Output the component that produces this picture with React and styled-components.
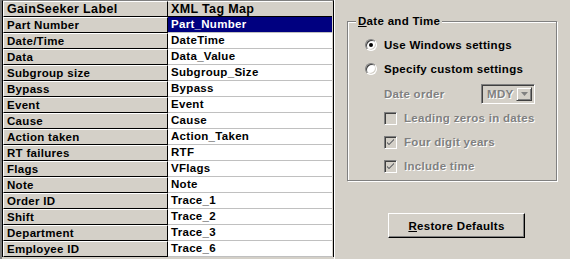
import styled, { createGlobalStyle, css } from "styled-components";

const GlobalStyle = createGlobalStyle`
  html, body {
    margin: 0;
    padding: 0;
    background: #d4d0c8;
  }
  body {
    font-family: "Liberation Sans", Arial, sans-serif;
    font-size: 11.5px;
    letter-spacing: 0.3px;
    font-weight: bold;
    color: #000;
  }
`;

const disabledText = css`
  color: #808080;
  text-shadow: 1px 1px 0 #fff;
`;

const headerText = css`
  font-size: 12.5px;
  letter-spacing: 0.35px;
`;

const Window = styled.div`
  display: flex;
  width: 570px;
  height: 259px;
  overflow: hidden;
`;

const TableFrame = styled.div`
  width: 335px;
  height: 259px;
  border-left: 2px solid #808080;
  border-right: 1px solid #fff;
  box-sizing: border-box;
  flex-shrink: 0;
`;

const Grid = styled.div`
  display: grid;
  grid-template-columns: 165px 164px;
  grid-auto-rows: 16px;
  border-left: 1px solid #000;
  border-right: 1px solid #000;
  border-top: 1px solid #808080;
`;

const LabelCell = styled.div`
  box-sizing: border-box;
  height: 16px;
  background: #d4d0c8;
  border-top: 1px solid #fff;
  border-left: 1px solid #fff;
  border-bottom: 1px solid #000;
  border-right: 1px solid #000;
  padding-left: 3px;
  line-height: 14px;
  white-space: nowrap;
  overflow: hidden;
  ${(p) => p.$header && headerText}
`;

const ValueCell = styled.div`
  box-sizing: border-box;
  height: 16px;
  padding-left: 3px;
  line-height: 15px;
  white-space: nowrap;
  overflow: hidden;
  background: ${(p) => (p.$selected ? "#000080" : "#fff")};
  color: ${(p) => (p.$selected ? "#fff" : "#000")};
  border-bottom: 1px solid #c0c0c0;
  ${(p) =>
    p.$header &&
    css`
      ${headerText}
      background: #d4d0c8;
      border-top: 1px solid #fff;
      border-bottom: 1px solid #000;
      line-height: 14px;
    `}
`;

const Panel = styled.div`
  flex: 1;
  display: flex;
  flex-direction: column;
  padding: 21px 13px 0 12px;
`;

const GroupBox = styled.div`
  position: relative;
  height: 160px;
  box-sizing: border-box;
  border: 1px solid #808080;
  box-shadow: inset 1px 1px 0 #fff, 1px 1px 0 #fff;
  padding: 11px 0 0 17px;
  display: flex;
  flex-direction: column;
`;

const GroupTitle = styled.div`
  position: absolute;
  top: -8px;
  left: 8px;
  padding: 0 2px;
  background: #d4d0c8;
  line-height: 14px;
`;

const Row = styled.div`
  display: flex;
  align-items: center;
  height: 24px;
  padding-left: ${(p) => p.$indent || 0}px;
  ${(p) => p.$disabled && disabledText}
`;

const Radio = styled.span`
  position: relative;
  width: 12px;
  height: 12px;
  box-sizing: border-box;
  border-radius: 50%;
  border: 1px solid;
  border-color: #808080 #fff #fff #808080;
  box-shadow: inset 1px 1px 0 #404040, inset -1px -1px 0 #d4d0c8;
  background: #fff;
  margin-right: 7px;
  flex-shrink: 0;
  ${(p) =>
    p.$checked &&
    css`
      &::after {
        content: "";
        position: absolute;
        left: 3px;
        top: 3px;
        width: 4px;
        height: 4px;
        border-radius: 50%;
        background: #000;
      }
    `}
`;

const CheckBox = styled.span`
  width: 13px;
  height: 13px;
  box-sizing: border-box;
  border: 1px solid;
  border-color: #808080 #fff #fff #808080;
  box-shadow: inset 1px 1px 0 #404040, inset -1px -1px 0 #d4d0c8;
  background: #d4d0c8;
  margin-right: 7px;
  display: flex;
  align-items: center;
  justify-content: center;
  flex-shrink: 0;
`;

const FieldLabel = styled.span`
  width: 97px;
`;

const Combo = styled.div`
  display: flex;
  width: 54px;
  height: 20px;
  box-sizing: border-box;
  border: 1px solid;
  border-color: #808080 #fff #fff #808080;
  box-shadow: inset 1px 1px 0 #404040, inset -1px -1px 0 #d4d0c8;
  padding: 2px;
  text-shadow: none;
`;

const ComboText = styled.span`
  flex: 1;
  padding-left: 3px;
  line-height: 14px;
  ${disabledText}
`;

const ComboButton = styled.span`
  width: 16px;
  height: 14px;
  box-sizing: border-box;
  background: #d4d0c8;
  border: 1px solid;
  border-color: #d4d0c8 #404040 #404040 #d4d0c8;
  box-shadow: inset 1px 1px 0 #fff, inset -1px -1px 0 #808080;
  display: flex;
  align-items: center;
  justify-content: center;
`;

const Button = styled.button`
  align-self: flex-start;
  margin: 32px 0 0 41px;
  width: 137px;
  height: 25px;
  box-sizing: border-box;
  font: inherit;
  letter-spacing: inherit;
  color: #000;
  background: #d4d0c8;
  border: 1px solid;
  border-color: #fff #000 #000 #fff;
  box-shadow: inset -1px -1px 0 #808080;
  padding: 0;
`;

const rows = [
  ["Part Number", "Part_Number"],
  ["Date/Time", "DateTime"],
  ["Data", "Data_Value"],
  ["Subgroup size", "Subgroup_Size"],
  ["Bypass", "Bypass"],
  ["Event", "Event"],
  ["Cause", "Cause"],
  ["Action taken", "Action_Taken"],
  ["RT failures", "RTF"],
  ["Flags", "VFlags"],
  ["Note", "Note"],
  ["Order ID", "Trace_1"],
  ["Shift", "Trace_2"],
  ["Department", "Trace_3"],
  ["Employee ID", "Trace_6"],
];

const Check = () => (
  <svg width="7" height="7" viewBox="0 0 7 7">
    <path d="M0 3l2 2l5-5 M0 4l2 2l5-5" fill="none" stroke="#808080" strokeWidth="1" />
  </svg>
);

const Arrow = () => (
  <svg width="7" height="4" viewBox="0 0 7 4">
    <path d="M0 0h7l-3.5 4z" fill="#808080" />
  </svg>
);

const App = () => (
  <Window>
    <GlobalStyle />
    <TableFrame>
      <Grid>
        <LabelCell $header>GainSeeker Label</LabelCell>
        <ValueCell $header>XML Tag Map</ValueCell>
        {rows.map(([label, tag], i) => (
          <>
            <LabelCell key={label}>{label}</LabelCell>
            <ValueCell key={tag} $selected={i === 0}>{tag}</ValueCell>
          </>
        ))}
      </Grid>
    </TableFrame>
    <Panel>
      <GroupBox>
        <GroupTitle><u>D</u>ate and Time</GroupTitle>
        <Row><Radio $checked />Use Windows settings</Row>
        <Row><Radio />Specify custom settings</Row>
        <Row $indent={19} $disabled style={{ height: 25 }}>
          <FieldLabel>Date order</FieldLabel>
          <Combo>
            <ComboText>MDY</ComboText>
            <ComboButton><Arrow /></ComboButton>
          </Combo>
        </Row>
        <Row $indent={19} $disabled><CheckBox />Leading zeros in dates</Row>
        <Row $indent={19} $disabled><CheckBox><Check /></CheckBox>Four digit years</Row>
        <Row $indent={19} $disabled><CheckBox><Check /></CheckBox>Include time</Row>
      </GroupBox>
      <Button><u>R</u>estore Defaults</Button>
    </Panel>
  </Window>
);

export default App;
